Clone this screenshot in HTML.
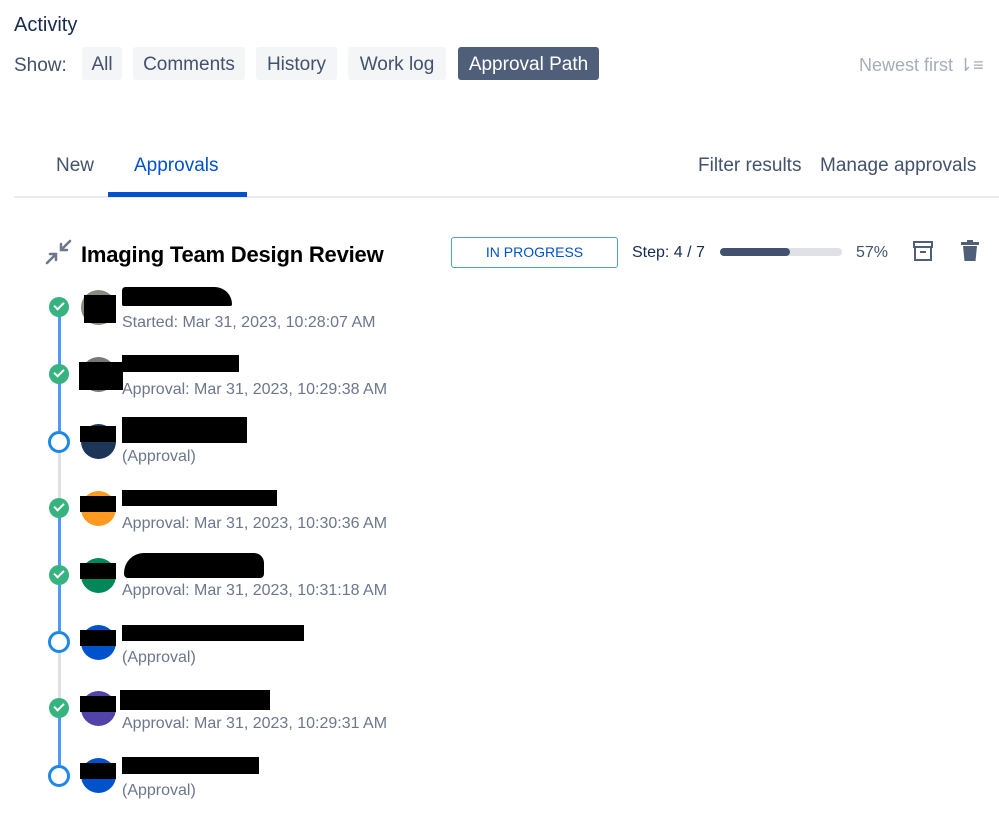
<!DOCTYPE html>
<html><head><style>
body{margin:0;width:999px;height:820px;background:#fff;font-family:"Liberation Sans",sans-serif;position:relative;overflow:hidden}
.a{position:absolute;white-space:nowrap}
.btn{position:absolute;top:47px;height:33px;background:#f4f5f7;border-radius:3px;color:#42526e;font-size:19px;line-height:35px;text-align:center}
.sub{position:absolute;left:122px;font-size:16px;color:#6b778c;white-space:nowrap}
.av{position:absolute;left:81px;width:35px;height:35px;border-radius:50%}
.red{position:absolute;background:#000}
.ck{position:absolute;left:49px;width:20px;height:20px;border-radius:50%;background:#36b37e}
.ck::after{content:"";position:absolute;left:5px;top:5px;width:8px;height:4px;border-left:2.5px solid #fff;border-bottom:2.5px solid #fff;transform:rotate(-45deg)}
.op{position:absolute;left:48px;width:16px;height:16px;border-radius:50%;border:3px solid #1e88e5;background:#fff}
.ln{position:absolute;left:58px;width:3px}
</style></head><body>
<div class="a" style="left:14px;top:14px;font-size:20px;color:#172b4d">Activity</div>
<div class="a" style="left:14px;top:55px;font-size:19px;color:#42526e">Show:</div>
<div class="btn" style="left:82px;width:40px">All</div>
<div class="btn" style="left:133px;width:112px">Comments</div>
<div class="btn" style="left:256px;width:81px">History</div>
<div class="btn" style="left:348px;width:98px">Work log</div>
<div class="btn" style="left:458px;width:141px;background:#505f79;color:#fff">Approval Path</div>
<div class="a" style="left:859px;top:55px;font-size:18px;color:#a5adba">Newest first ⇂≡</div>

<div class="a" style="left:56px;top:155px;font-size:19px;color:#42526e">New</div>
<div class="a" style="left:134px;top:155px;font-size:19px;color:#0052cc">Approvals</div>
<div class="a" style="left:14px;top:196px;width:985px;height:2px;background:#ebecf0"></div>
<div class="a" style="left:108px;top:192px;width:139px;height:5px;background:#0052cc"></div>
<div class="a" style="left:698px;top:155px;font-size:19px;color:#42526e">Filter results</div>
<div class="a" style="left:820px;top:155px;font-size:19px;color:#42526e">Manage approvals</div>

<svg class="a" style="left:45px;top:238px" width="28" height="28" viewBox="0 0 28 28" fill="none" stroke="#6b778c" stroke-width="2.5" stroke-linecap="round"><path d="M2 25L11 16M5 16h6v6M25 3L16 12M16 6v6h6"/></svg>
<div class="a" style="left:81px;top:242px;font-size:22px;font-weight:bold;color:#000;letter-spacing:-0.2px">Imaging Team Design Review</div>
<div class="a" style="left:451px;top:237px;width:165px;height:29px;border:1px solid #4c9aff;border-radius:3px;color:#0052cc;font-size:14px;line-height:29px;text-align:center">IN PROGRESS</div>
<div class="a" style="left:632px;top:244px;font-size:16px;color:#172b4d">Step: 4 / 7</div>
<div class="a" style="left:720px;top:248px;width:122px;height:8px;border-radius:4px;background:#dfe1e6"></div>
<div class="a" style="left:720px;top:248px;width:70px;height:8px;border-radius:4px;background:#42526e"></div>
<div class="a" style="left:856px;top:244px;font-size:16px;color:#42526e">57%</div>
<svg class="a" style="left:912px;top:240px" width="22" height="22" viewBox="0 0 22 22" fill="none" stroke="#505f79" stroke-width="2"><rect x="2" y="2" width="18" height="5"/><path d="M3 7v13h16V7M8 12h6"/></svg>
<svg class="a" style="left:960px;top:240px" width="20" height="22" viewBox="0 0 20 22" fill="#505f79"><rect x="1" y="2" width="18" height="3"/><rect x="7" y="0" width="6" height="3"/><path d="M3 6h14l-1.5 15h-11z"/></svg>

<div class="ln" style="top:307px;height:134px;background:#4c9aff"></div>
<div class="ln" style="top:441px;height:67px;background:#dfe1e6"></div>
<div class="ln" style="top:508px;height:133px;background:#4c9aff"></div>
<div class="ln" style="top:641px;height:67px;background:#dfe1e6"></div>
<div class="ln" style="top:708px;height:67px;background:#4c9aff"></div>

<div class="ck" style="top:297px"></div>
<div class="av" style="top:290px;background:#8a8a7a"></div><div class="red" style="left:84px;top:295px;width:32px;height:28px"></div>
<div class="red" style="left:122px;top:287px;width:110px;height:19px;border-radius:4px 20px 2px 2px"></div>
<div class="sub" style="top:314px">Started: Mar 31, 2023, 10:28:07 AM</div>

<div class="ck" style="top:364px"></div>
<div class="av" style="top:357px;background:#777"></div><div class="red" style="left:79px;top:362px;width:44px;height:28px"></div>
<div class="red" style="left:122px;top:355px;width:117px;height:17px"></div>
<div class="sub" style="top:381px">Approval: Mar 31, 2023, 10:29:38 AM</div>

<div class="op" style="top:431px"></div>
<div class="av" style="top:424px;background:#1d3557"></div><div class="red" style="left:80px;top:426px;width:36px;height:16px"></div>
<div class="red" style="left:122px;top:417px;width:125px;height:26px"></div>
<div class="sub" style="top:448px">(Approval)</div>

<div class="ck" style="top:498px"></div>
<div class="av" style="top:491px;background:#ff991f"></div><div class="red" style="left:80px;top:496px;width:36px;height:16px"></div>
<div class="red" style="left:122px;top:490px;width:155px;height:16px"></div>
<div class="sub" style="top:515px">Approval: Mar 31, 2023, 10:30:36 AM</div>

<div class="ck" style="top:565px"></div>
<div class="av" style="top:558px;background:#00875a"></div><div class="red" style="left:80px;top:563px;width:36px;height:16px"></div>
<div class="red" style="left:124px;top:553px;width:140px;height:25px;border-radius:20px 10px 4px 4px"></div>
<div class="sub" style="top:582px">Approval: Mar 31, 2023, 10:31:18 AM</div>

<div class="op" style="top:631px"></div>
<div class="av" style="top:625px;background:#0052cc"></div><div class="red" style="left:80px;top:630px;width:36px;height:16px"></div>
<div class="red" style="left:122px;top:625px;width:182px;height:16px"></div>
<div class="sub" style="top:649px">(Approval)</div>

<div class="ck" style="top:698px"></div>
<div class="av" style="top:691px;background:#5243aa"></div><div class="red" style="left:80px;top:696px;width:36px;height:16px"></div>
<div class="red" style="left:120px;top:690px;width:150px;height:20px"></div>
<div class="sub" style="top:715px">Approval: Mar 31, 2023, 10:29:31 AM</div>

<div class="op" style="top:765px"></div>
<div class="av" style="top:758px;background:#0052cc"></div><div class="red" style="left:80px;top:763px;width:36px;height:16px"></div>
<div class="red" style="left:122px;top:757px;width:137px;height:17px"></div>
<div class="sub" style="top:782px">(Approval)</div>
</body></html>
